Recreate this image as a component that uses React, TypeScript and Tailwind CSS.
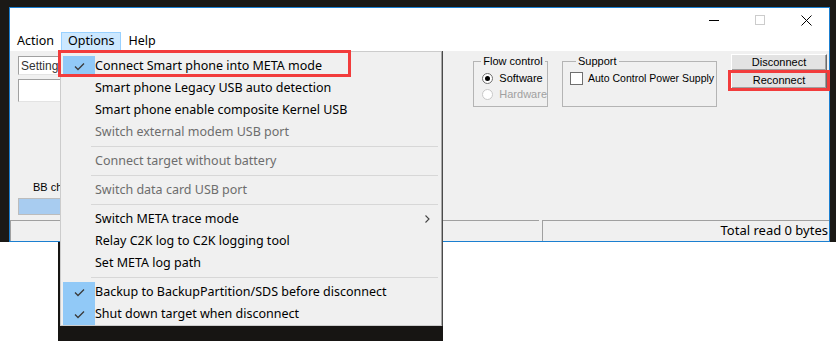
const ui = { fontFamily: '"Noto Sans", "Liberation Sans", sans-serif' };
const classic = { fontFamily: '"Liberation Sans", Arial, sans-serif' };

type Item =
  | { kind: "item"; label: string; checked?: boolean; disabled?: boolean; sub?: boolean; check?: string }
  | { kind: "sep" };

const items: Item[] = [
  { kind: "item", label: "Connect Smart phone into META mode", checked: true, check: "my-[1px]" },
  { kind: "item", label: "Smart phone Legacy USB auto detection" },
  { kind: "item", label: "Smart phone enable composite Kernel USB" },
  { kind: "item", label: "Switch external modem USB port", disabled: true },
  { kind: "sep" },
  { kind: "item", label: "Connect target without battery", disabled: true },
  { kind: "sep" },
  { kind: "item", label: "Switch data card USB port", disabled: true },
  { kind: "sep" },
  { kind: "item", label: "Switch META trace mode", sub: true },
  { kind: "item", label: "Relay C2K log to C2K logging tool" },
  { kind: "item", label: "Set META log path" },
  { kind: "sep" },
  { kind: "item", label: "Backup to BackupPartition/SDS before disconnect", checked: true, check: "mt-[1px]" },
  { kind: "item", label: "Shut down target when disconnect", checked: true },
];

function Check() {
  return (
    <svg width="11" height="9" viewBox="0 0 11 9">
      <polyline points="1,4.5 4,7.5 10,1.5" fill="none" stroke="#3a3a3a" strokeWidth="1.3" />
    </svg>
  );
}

function OptionsMenu() {
  return (
    <div
      className="absolute left-[60px] top-[51px] w-[382px] border border-[#cccccc] border-r-[#a8a8a8] shadow-[1px_0_0_#4a4a4a] bg-[#f0f0f0] pt-[3px] text-[12.5px] text-black"
      style={ui}
    >
      {items.map((it, i) =>
        it.kind === "sep" ? (
          <div key={i} className="h-[7px] flex items-center">
            <div className="ml-[30px] mr-[3px] h-px flex-1 bg-[#d7d7d7]" />
          </div>
        ) : (
          <div key={i} className="h-[22px] flex items-stretch">
            <div className="w-[34px] flex">
              {it.checked && (
                <div className={`ml-[2px] w-[22px] flex-1 bg-[#91c9f7] flex items-center justify-center ${it.check ?? ""}`}>
                  <Check />
                </div>
              )}
            </div>
            <div className={`flex items-center flex-1 whitespace-nowrap ${it.disabled ? "text-[#6d6d6d]" : ""}`}>
              {it.label}
            </div>
            {it.sub && (
              <div className="flex items-center mr-[11px]">
                <svg width="5" height="8" viewBox="0 0 5 8">
                  <polyline points="0.5,0.5 4,4 0.5,7.5" fill="none" stroke="#444" strokeWidth="1.1" />
                </svg>
              </div>
            )}
          </div>
        )
      )}
    </div>
  );
}

function Radio({ on, disabled, label }: { on?: boolean; disabled?: boolean; label: string }) {
  return (
    <div className="flex items-center gap-[6px] h-[16px]">
      <span
        className={`w-[11px] h-[11px] rounded-full border flex items-center justify-center bg-white ${
          disabled ? "border-[#c8c8c8] bg-[#f4f4f4]" : "border-[#6f6f6f]"
        }`}
      >
        {on && <span className="w-[5px] h-[5px] rounded-full bg-black" />}
      </span>
      <span className={disabled ? "text-[#a0a0a0]" : "text-black"}>{label}</span>
    </div>
  );
}

function Window() {
  return (
    <div className="w-[821px] h-[235px] border border-[#1b7fd0] bg-[#f0f0f0] flex flex-col">
      {/* title bar */}
      <div className="h-[24px] bg-white flex justify-end">
        <div className="w-[46px] flex items-center justify-center">
          <div className="w-[10px] h-px bg-black" />
        </div>
        <div className="w-[46px] flex items-center justify-center">
          <div className="w-[10px] h-[10px] border border-[#cccccc]" />
        </div>
        <div className="w-[46px] flex items-center justify-center">
          <svg width="11" height="11" viewBox="0 0 11 11">
            <path d="M0.5 0.5 L10.5 10.5 M10.5 0.5 L0.5 10.5" stroke="#000" strokeWidth="1" />
          </svg>
        </div>
      </div>

      {/* menu bar */}
      <div className="h-[19px] bg-white flex text-[12.5px] text-black" style={ui}>
        <div className="px-[7px] flex items-center">Action</div>
        <div className="px-[6px] flex items-center bg-[#cce8ff] border border-[#99d1ff]">Options</div>
        <div className="px-[7px] flex items-center">Help</div>
      </div>

      {/* client area */}
      <div className="flex-1 flex text-[11px] text-black" style={classic}>
        <div className="pl-[8px] pt-[5px] flex flex-col w-[140px]">
          <div className="h-[19px] border border-t-[#a0a0a0] border-l-[#a0a0a0] border-r-[#e3e3e3] border-b-[#e3e3e3] bg-white flex items-center pl-[2px] text-[12px] text-[#333]">
            Setting
          </div>
          <div className="mt-[4px] h-[23px] border border-t-[#a0a0a0] border-l-[#a0a0a0] border-r-[#e3e3e3] border-b-[#e3e3e3] bg-white" />
          <div className="mt-[79px] pl-[15px] leading-[13px]">BB chip</div>
          <div className="mt-[4px] h-[17px] border border-[#bcbcbc] bg-[#a8ccf0]" />
        </div>

        <div className="ml-auto pr-[2px] pt-[3px] flex items-start gap-[14px]">
          <fieldset className="mt-[1px] w-[74px] h-[52px] border border-[#b4b4b4] pl-[8px] pr-0">
            <legend className="px-[2px] -ml-[1px] leading-[13px]">Flow control</legend>
            <div className="mt-[2px] flex flex-col">
              <Radio on label="Software" />
              <Radio disabled label="Hardware" />
            </div>
          </fieldset>

          <fieldset className="mt-[1px] w-[155px] h-[52px] border border-[#b4b4b4] pl-[7px] pr-0">
            <legend className="ml-[6px] px-[2px] leading-[13px]">Support</legend>
            <div className="mt-[3px] flex items-center gap-[5px]">
              <span className="w-[13px] h-[13px] border border-[#6f6f6f] bg-white" />
              <span className="text-[10.5px] whitespace-nowrap">Auto Control Power Supply</span>
            </div>
          </fieldset>

          <div className="w-[96px] flex flex-col gap-[1px]">
            <button className="h-[17px] border border-t-white border-l-white border-r-[#6b6b6b] border-b-[#6b6b6b] bg-[#e3e3e3] shadow-[inset_-1px_-1px_0_#a0a0a0] leading-none">
              Disconnect
            </button>
            <button className="h-[17px] border border-t-white border-l-white border-r-[#6b6b6b] border-b-[#6b6b6b] bg-[#e3e3e3] shadow-[inset_-1px_-1px_0_#a0a0a0] leading-none">
              Reconnect
            </button>
          </div>
        </div>
      </div>

      {/* status bar */}
      <div className="h-[21px] flex gap-[3px] text-[13px] text-black" style={ui}>
        <div className="flex-1 border-t border-l border-[#a0a0a0]" />
        <div className="w-[287px] border-t border-l border-[#a0a0a0] flex items-center justify-end pr-[1px]">
          Total read 0 bytes
        </div>
      </div>
    </div>
  );
}

export default function App() {
  return (
    <div className="relative w-[836px] h-[341px] overflow-hidden bg-white">
      <div className="h-[242px] bg-[#1b1916] pt-[7px] pl-[9px]">
        <Window />
      </div>

      {/* backdrop captured behind the dropdown */}
      <div className="absolute left-[58px] top-[242px] w-[385px] h-[99px] bg-[#171513]" />
      <OptionsMenu />

      {/* red annotation boxes */}
      <div className="absolute left-[58px] top-[50px] w-[293px] h-[27px] border-[3px] border-[#f23c3c]" />
      <div className="absolute left-[728px] top-[70px] w-[102px] h-[21px] border-[3px] border-[#f23c3c]" />
    </div>
  );
}
